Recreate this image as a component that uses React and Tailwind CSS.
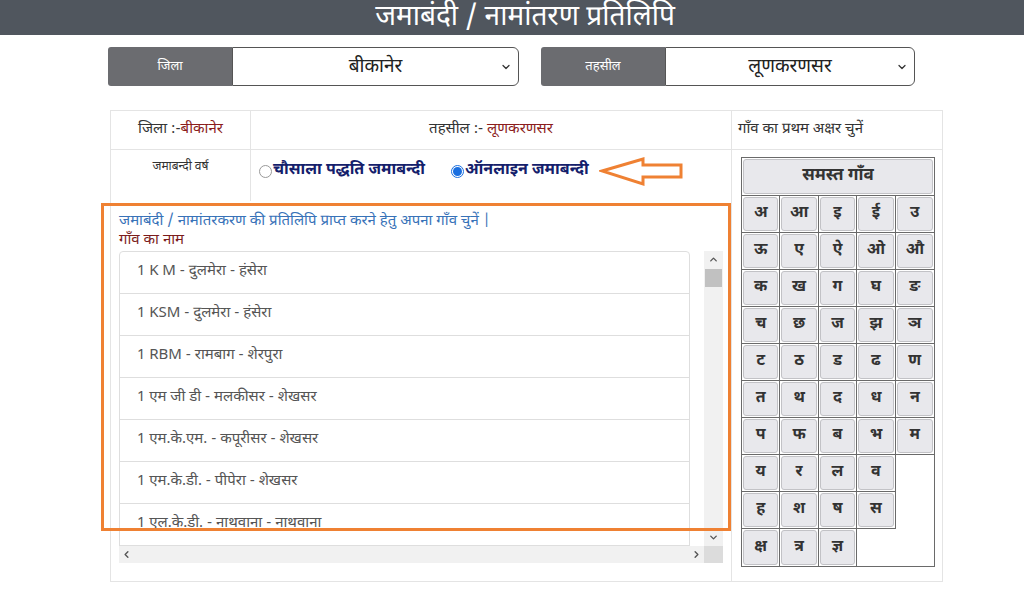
import React from "react";
import { ChevronDown, ChevronUp, ChevronLeft, ChevronRight } from "lucide-react";

const font = { fontFamily: '"Noto Sans Devanagari", "Lohit Devanagari", "Noto Sans", "Liberation Sans", sans-serif' };

const letters = [
  ["अ", "आ", "इ", "ई", "उ"],
  ["ऊ", "ए", "ऐ", "ओ", "औ"],
  ["क", "ख", "ग", "घ", "ङ"],
  ["च", "छ", "ज", "झ", "ञ"],
  ["ट", "ठ", "ड", "ढ", "ण"],
  ["त", "थ", "द", "ध", "न"],
  ["प", "फ", "ब", "भ", "म"],
  ["य", "र", "ल", "व", ""],
  ["ह", "श", "ष", "स", ""],
  ["क्ष", "त्र", "ज्ञ", "", ""],
];

const villages = [
  "1 K M - दुलमेरा - हंसेरा",
  "1 KSM - दुलमेरा - हंसेरा",
  "1 RBM - रामबाग - शेरपुरा",
  "1 एम जी डी - मलकीसर - शेखसर",
  "1 एम.के.एम. - कपूरीसर - शेखसर",
  "1 एम.के.डी. - पीपेरा - शेखसर",
  "1 एल.के.डी. - नाथवाना - नाथवाना",
];

const SelectBox = ({ label, value, width }) => (
  <div className={"flex h-[39px] " + width}>
    <div className="w-[124px] bg-[#6b6c70] text-white text-[13px] flex items-center justify-center rounded-l-[3px]">
      {label}
    </div>
    <div className="flex-1 relative bg-white border border-[#555] rounded-r-[6px] flex items-center justify-center pt-[4px] text-[19px] font-normal text-[#222]">
      {value}
      <ChevronDown className="absolute right-[6px] top-[13px] w-[12px] h-[12px] text-[#333]" strokeWidth={2.5} />
    </div>
  </div>
);

const Radio = ({ checked, label }) => (
  <label className="flex items-center">
    <span
      className={
        "w-[13px] h-[13px] rounded-full border flex items-center justify-center " +
        (checked ? "border-[#1a6fe0]" : "border-[#999]")
      }
    >
      {checked && <span className="w-[9px] h-[9px] rounded-full bg-[#1a6fe0]" />}
    </span>
    <span className="ml-[1px] text-[16px] font-bold text-[#14206b]">{label}</span>
  </label>
);

export default function App() {
  return (
    <div className="w-[1024px] h-[590px] bg-white overflow-hidden" style={font}>
      {/* header */}
      <div className="h-[35px] bg-[#50565e] text-white text-[28px] leading-[36px] text-center overflow-hidden">
        <span className="relative left-[13px]">जमाबंदी / नामांतरण प्रतिलिपि</span>
      </div>

      {/* selects */}
      <div className="flex gap-[22px] ml-[108px] mt-[12px]">
        <SelectBox label="जिला" value="बीकानेर" width="w-[411px]" />
        <SelectBox label="तहसील" value="लूणकरणसर" width="w-[374px]" />
      </div>

      {/* main table */}
      <div className="ml-[110px] mt-[24px] w-[833px] h-[472px] border border-[#e4e4e4] flex">
        <div className="w-[620px] flex flex-col relative">
          <div className="flex h-[39px] border-b border-[#e4e4e4] text-[15px]">
            <div className="w-[140px] border-r border-[#e4e4e4] flex items-center justify-center text-[#333]">
              जिला :-<span className="text-[#8b1c1c]">बीकानेर</span>
            </div>
            <div className="flex-1 flex items-center justify-center text-[#333]">
              तहसील :-&nbsp;<span className="text-[#8b1c1c]">लूणकरणसर</span>
            </div>
          </div>
          <div className="flex h-[51px]">
            <div className="w-[140px] border-r border-[#e4e4e4] text-[12px] text-[#333] text-center pt-[8px]">
              जमाबन्दी वर्ष
            </div>
            <div className="flex-1 flex items-start pt-[9px] pl-[8px]">
              <Radio label="चौसाला पद्धति जमाबन्दी" />
              <div className="w-[26px]" />
              <Radio checked label="ऑनलाइन जमाबन्दी" />
              <svg width="86" height="30" viewBox="0 0 86 30" className="ml-[10px] -mt-[2px]">
                <polygon
                  points="3,14 44,2 44,8 82,8 82,20 44,20 44,27"
                  fill="white"
                  stroke="#ef8133"
                  strokeWidth="3"
                  strokeLinejoin="miter"
                />
              </svg>
            </div>
          </div>
          <div className="flex-1 px-[8px] pt-[11px]">
            <div className="text-[15px] text-[#3872b8] leading-[20px]">
              जमाबंदी / नामांतरकरण की प्रतिलिपि प्राप्त करने हेतु अपना गाँव चुनें |
            </div>
            <div className="text-[15px] text-[#7b1c1c] leading-[18px]">गाँव का नाम</div>
            <div className="w-[604px] h-[312px] flex flex-col mt-[1px]">
              <div className="flex h-[295px]">
                <div className="w-[585px] overflow-hidden">
                  {villages.map((v, i) => (
                    <div
                      key={i}
                      className={
                        "w-[571px] h-[43px] border border-[#dedede] -mt-px first:mt-0 flex items-center pl-[17px] text-[15px] text-[#555] whitespace-nowrap" +
                        (i === 0 ? " rounded-t-[4px]" : "")
                      }
                    >
                      {v}
                    </div>
                  ))}
                </div>
                <div className="w-[19px] bg-[#f1f1f1] flex flex-col items-center">
                  <ChevronUp className="w-[11px] h-[11px] mt-[3px] text-[#555]" strokeWidth={3} />
                  <div className="w-[17px] h-[18px] bg-[#c1c1c1] mt-[4px]" />
                  <div className="flex-1" />
                  <ChevronDown className="w-[11px] h-[11px] mb-[3px] text-[#555]" strokeWidth={3} />
                </div>
              </div>
              <div className="flex h-[17px]">
                <div className="w-[585px] bg-[#f1f1f1] flex items-center justify-between px-[2px]">
                  <ChevronLeft className="w-[11px] h-[11px] text-[#555]" strokeWidth={3} />
                  <ChevronRight className="w-[11px] h-[11px] text-[#555]" strokeWidth={3} />
                </div>
                <div className="w-[19px] bg-[#dcdcdc]" />
              </div>
            </div>
          </div>
          {/* highlight */}
          <div className="absolute left-[-10px] top-[92px] w-[630px] h-[328px] border-[3px] border-[#ef8133] pointer-events-none" />
        </div>

        <div className="flex-1 border-l border-[#e4e4e4] flex flex-col">
          <div className="h-[39px] border-b border-[#e4e4e4] flex items-center pl-[6px] text-[15px] text-[#333]">
            गाँव का प्रथम अक्षर चुनें
          </div>
          <div className="pl-[9px] pt-[7px]">
            <div className="w-[194px] border border-[#6a6a6a]">
              <div className="h-[38px] border-b border-[#6a6a6a] p-[1px]">
                <div className="h-full bg-[#e8e8ec] border border-[#c2c2c6] rounded-[3px] flex items-center justify-center text-[17px] font-bold text-[#333]">
                  समस्त गाँव
                </div>
              </div>
              {letters.map((row, r) => (
                <div key={r} className="grid grid-cols-5 h-[37px]">
                  {row.map((l, c) =>
                    l ? (
                      <div
                        key={c}
                        className={
                          "p-[1px] border-[#6a6a6a]" +
                          (c < 4 ? " border-r" : "") +
                          (r < 9 ? " border-b" : "")
                        }
                      >
                        <div className="h-full bg-[#e8e8ec] border border-[#c2c2c6] rounded-[3px] flex items-center justify-center text-[16px] font-bold text-[#333]">
                          {l}
                        </div>
                      </div>
                    ) : (
                      <div key={c} />
                    )
                  )}
                </div>
              ))}
            </div>
          </div>
        </div>
      </div>
    </div>
  );
}
